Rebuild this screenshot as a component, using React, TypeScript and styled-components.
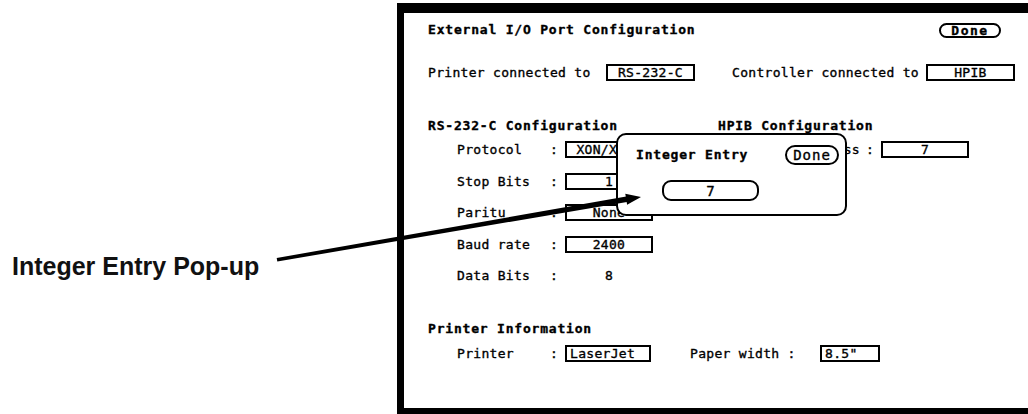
import React from 'react';
import styled, { createGlobalStyle } from 'styled-components';

const GlobalStyle = createGlobalStyle`
  html, body {
    margin: 0;
    padding: 0;
    background: #fff;
  }
  body {
    font-family: "DejaVu Sans Mono", "Liberation Mono", monospace;
    color: #000;
  }
`;

const Page = styled.div`
  position: relative;
  width: 1028px;
  height: 414px;
  display: flex;
  overflow: hidden;
  background: #fff;
`;

const Callout = styled.div`
  flex: none;
  width: 397px;
  box-sizing: border-box;
  padding: 254px 0 0 12px;
  font-family: "Liberation Sans", Arial, sans-serif;
  font-weight: 700;
  font-size: 25px;
  line-height: 25px;
  color: #111;
`;

const Screen = styled.div`
  position: relative;
  flex: 1;
  margin-top: 3px;
  height: 411px;
  box-sizing: border-box;
  border-top: 10px solid #000;
  border-left: 7px solid #000;
  border-bottom: 6px solid #000;
  padding: 0 13px 0 24px;
  font-size: 13px;
  letter-spacing: 0.3px;
  white-space: nowrap;
  -webkit-text-stroke: 0.35px #000;
`;

const TitleRow = styled.div`
  margin-top: 6px;
  height: 22px;
  display: flex;
  align-items: center;
  justify-content: space-between;
`;

const Heading = styled.div`
  font-weight: 700;
  letter-spacing: 0.8px;
  line-height: 14px;
  height: 14px;
`;

const DoneButton = styled.div<{ $big?: boolean }>`
  box-sizing: border-box;
  width: ${p => (p.$big ? 54 : 62)}px;
  height: ${p => (p.$big ? 20 : 15)}px;
  margin-right: ${p => (p.$big ? 0 : 14)}px;
  border: 2px solid #000;
  border-radius: 10px;
  display: flex;
  align-items: center;
  justify-content: center;
  font-weight: ${p => (p.$big ? 400 : 700)};
  font-size: ${p => (p.$big ? 14 : 13)}px;
  letter-spacing: ${p => (p.$big ? 1 : 1.5)}px;
`;

const ConnRow = styled.div`
  margin-top: 23px;
  height: 17px;
  display: grid;
  grid-template-columns: 178px 89px 37px 194px 89px;
  align-items: center;
`;

const Text = styled.span``;

const ValueBox = styled.div<{ $plain?: boolean; $left?: boolean }>`
  box-sizing: border-box;
  height: 17px;
  border: ${p => (p.$plain ? 'none' : '2px solid #000')};
  display: flex;
  align-items: center;
  justify-content: ${p => (p.$left ? 'flex-start' : 'center')};
  padding: 0 3px;
  overflow: hidden;
`;

const SectionGrid = styled.div`
  margin-top: 38px;
  display: grid;
  grid-template-columns: 290px 1fr;
`;

const Column = styled.div`
  display: flex;
  flex-direction: column;
`;

const FieldList = styled.div`
  margin-top: 8px;
  padding-left: 29px;
  display: flex;
  flex-direction: column;
  gap: 14.5px;
`;

const FieldRow = styled.div`
  height: 17px;
  display: grid;
  grid-template-columns: 93px 15px 88px;
  align-items: center;
`;

const AddressRow = styled.div`
  margin-top: 8px;
  height: 17px;
  display: grid;
  grid-template-columns: 142px 21px 88px;
  align-items: center;
  & > span:first-child {
    justify-self: end;
  }
  & > span:nth-child(2) {
    padding-left: 6px;
  }
`;

const PrinterSection = styled.div`
  margin-top: 38px;
`;

const PrinterRow = styled.div`
  margin-top: 9px;
  padding-left: 29px;
  height: 17px;
  display: grid;
  grid-template-columns: 93px 15px 86px 39px 130px 60px;
  align-items: center;
`;

const Popup = styled.div`
  position: absolute;
  left: 212px;
  top: 120px;
  width: 231px;
  height: 83px;
  box-sizing: border-box;
  border: 2px solid #000;
  border-radius: 10px;
  background: #fff;
  padding: 10px 6px 0 18px;
`;

const PopupHeader = styled.div`
  height: 20px;
  display: flex;
  align-items: center;
  justify-content: space-between;
`;

const EntryField = styled.div`
  box-sizing: border-box;
  margin: 15px 0 0 26px;
  width: 97px;
  height: 21px;
  border: 2px solid #000;
  border-radius: 9px;
  display: flex;
  align-items: center;
  justify-content: center;
  font-size: 14px;
`;

const Arrow = styled.svg`
  position: absolute;
  left: 0;
  top: 0;
  pointer-events: none;
`;

type Field = { label: string; value: string; plain?: boolean };

const rsFields: Field[] = [
  { label: 'Protocol', value: 'XON/XOFF' },
  { label: 'Stop Bits', value: '1' },
  { label: 'Paritu', value: 'None' },
  { label: 'Baud rate', value: '2400' },
  { label: 'Data Bits', value: '8', plain: true },
];

export default function App() {
  return (
    <Page>
      <GlobalStyle />
      <Callout>Integer Entry Pop-up</Callout>
      <Screen>
        <TitleRow>
          <Heading>External I/O Port Configuration</Heading>
          <DoneButton>Done</DoneButton>
        </TitleRow>

        <ConnRow>
          <Text>Printer connected to</Text>
          <ValueBox>RS-232-C</ValueBox>
          <span />
          <Text>Controller connected to</Text>
          <ValueBox>HPIB</ValueBox>
        </ConnRow>

        <SectionGrid>
          <Column>
            <Heading>RS-232-C Configuration</Heading>
            <FieldList>
              {rsFields.map(f => (
                <FieldRow key={f.label}>
                  <Text>{f.label}</Text>
                  <Text>:</Text>
                  <ValueBox $plain={f.plain}>{f.value}</ValueBox>
                </FieldRow>
              ))}
            </FieldList>
          </Column>
          <Column>
            <Heading>HPIB Configuration</Heading>
            <AddressRow>
              <span>HPIB Address</span>
              <span>:</span>
              <ValueBox>7</ValueBox>
            </AddressRow>
          </Column>
        </SectionGrid>

        <PrinterSection>
          <Heading>Printer Information</Heading>
          <PrinterRow>
            <Text>Printer</Text>
            <Text>:</Text>
            <ValueBox $left>LaserJet</ValueBox>
            <span />
            <Text>Paper width :</Text>
            <ValueBox $left>8.5"</ValueBox>
          </PrinterRow>
        </PrinterSection>

        <Popup>
          <PopupHeader>
            <Heading>Integer Entry</Heading>
            <DoneButton $big>Done</DoneButton>
          </PopupHeader>
          <EntryField>7</EntryField>
        </Popup>
      </Screen>

      <Arrow width="1028" height="414" viewBox="0 0 1028 414">
        <polygon points="277.3,261.5 276.7,258 627.6,196.3 628.4,201.7" fill="#000" />
        <polygon points="641,197 625.3,193.8 627.1,204.7" fill="#000" />
      </Arrow>
    </Page>
  );
}
